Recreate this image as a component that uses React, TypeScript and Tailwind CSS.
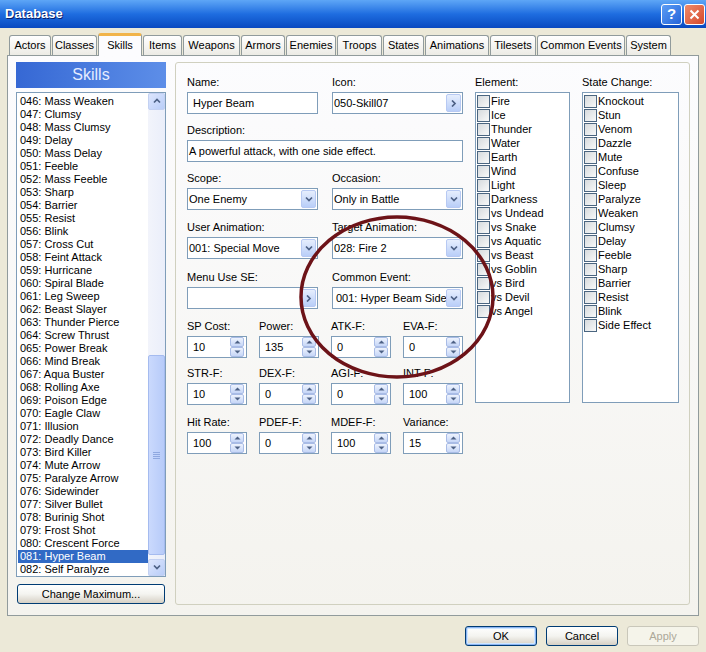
import React from 'react';

const skills = [
  '046: Mass Weaken', '047: Clumsy', '048: Mass Clumsy', '049: Delay', '050: Mass Delay',
  '051: Feeble', '052: Mass Feeble', '053: Sharp', '054: Barrier', '055: Resist',
  '056: Blink', '057: Cross Cut', '058: Feint Attack', '059: Hurricane', '060: Spiral Blade',
  '061: Leg Sweep', '062: Beast Slayer', '063: Thunder Pierce', '064: Screw Thrust', '065: Power Break',
  '066: Mind Break', '067: Aqua Buster', '068: Rolling Axe', '069: Poison Edge', '070: Eagle Claw',
  '071: Illusion', '072: Deadly Dance', '073: Bird Killer', '074: Mute Arrow', '075: Paralyze Arrow',
  '076: Sidewinder', '077: Silver Bullet', '078: Burinig Shot', '079: Frost Shot', '080: Crescent Force',
  '081: Hyper Beam', '082: Self Paralyze',
];

const elements = [
  'Fire', 'Ice', 'Thunder', 'Water', 'Earth', 'Wind', 'Light', 'Darkness',
  'vs Undead', 'vs Snake', 'vs Aquatic', 'vs Beast', 'vs Goblin', 'vs Bird', 'vs Devil', 'vs Angel',
];

const states = [
  'Knockout', 'Stun', 'Venom', 'Dazzle', 'Mute', 'Confuse', 'Sleep', 'Paralyze', 'Weaken',
  'Clumsy', 'Delay', 'Feeble', 'Sharp', 'Barrier', 'Resist', 'Blink', 'Side Effect',
];

const tabs: { label: string; w: string; active?: boolean }[] = [
  { label: 'Actors', w: 'w-[42px]' },
  { label: 'Classes', w: 'w-[45px]' },
  { label: 'Skills', w: 'w-[44px]', active: true },
  { label: 'Items', w: 'w-[39px]' },
  { label: 'Weapons', w: 'w-[57px]' },
  { label: 'Armors', w: 'w-[44px]' },
  { label: 'Enemies', w: 'w-[50px]' },
  { label: 'Troops', w: 'w-[45px]' },
  { label: 'States', w: 'w-[41px]' },
  { label: 'Animations', w: 'w-[64px]' },
  { label: 'Tilesets', w: 'w-[46px]' },
  { label: 'Common Events', w: 'w-[88px]' },
  { label: 'System', w: 'w-[45px]' },
];

const Label = ({ children }: { children: React.ReactNode }) => (
  <div className="h-[19px] leading-[18px] text-black whitespace-nowrap">{children}</div>
);

const Chevron = ({ dir }: { dir: 'down' | 'right' | 'up' }) => {
  const d = dir === 'down' ? 'M1 1.5 L4 4.5 L7 1.5' : dir === 'up' ? 'M1 4.5 L4 1.5 L7 4.5' : 'M2 0.5 L5 3.5 L2 6.5';
  return (
    <svg width="8" height="7" viewBox="0 0 8 7">
      <path d={d} stroke="#4d6185" strokeWidth="1.7" fill="none" />
    </svg>
  );
};

const SideBtn = ({ dir }: { dir: 'down' | 'right' }) => (
  <div className="absolute right-[1px] top-[1px] bottom-[1px] w-[15px] rounded-[2px] border border-[#b7c9f3] bg-gradient-to-b from-[#e6eefd] to-[#b9cef8] flex items-center justify-center">
    <Chevron dir={dir} />
  </div>
);

const Field = ({ value, pad = 'pl-[5px]', btn }: { value: string; pad?: string; btn?: 'down' | 'right' }) => (
  <div className={`relative h-[22px] border border-[#7f9db9] bg-white leading-[20px] text-black whitespace-nowrap overflow-hidden ${pad}`}>
    {value}
    {btn && <SideBtn dir={btn} />}
  </div>
);

const Tri = ({ up }: { up?: boolean }) => (
  <svg width="7" height="4" viewBox="0 0 7 4">
    <path d={up ? 'M0.5 3.5 L3.5 0.5 L6.5 3.5 Z' : 'M0.5 0.5 L3.5 3.5 L6.5 0.5 Z'} fill="#4d6185" />
  </svg>
);

const Spin = ({ value }: { value: string }) => (
  <div className="relative h-[22px] border border-[#7f9db9] bg-white pl-[5px] leading-[20px] text-black">
    {value}
    <div className="absolute right-[2px] top-0 bottom-0 w-[14px] flex flex-col">
      <div className="h-[10px] rounded-[2px] border border-[#a9bce6] bg-gradient-to-b from-[#eef3fd] to-[#c6d6f7] flex items-center justify-center">
        <Tri up />
      </div>
      <div className="h-[10px] rounded-[2px] border border-[#a9bce6] bg-gradient-to-b from-[#eef3fd] to-[#c6d6f7] flex items-center justify-center">
        <Tri />
      </div>
    </div>
  </div>
);

const Check = ({ label }: { label: string }) => (
  <div className="h-[14px] flex items-center gap-[1px] whitespace-nowrap leading-[14px]">
    <div className="w-[13px] h-[13px] border border-[#4a6580] bg-gradient-to-br from-[#d6dadd] to-[#f8f9f9]" />
    <span>{label}</span>
  </div>
);

const XpButton = ({ label, focus, disabled, w }: { label: string; focus?: boolean; disabled?: boolean; w: string }) => {
  if (disabled) {
    return (
      <div className={`${w} h-[20px] rounded-[3px] border border-[#c9c7ba] bg-[#f5f4ea] text-[#aca899] flex items-center justify-center`}>
        {label}
      </div>
    );
  }
  return (
    <div
      className={`${w} h-[20px] rounded-[3px] border border-[#003c74] bg-gradient-to-b from-[#ffffff] via-[#f4f4f0] to-[#d6d0c5] text-black flex items-center justify-center ${
        focus ? 'shadow-[inset_0_0_0_1px_#8cb4f2,inset_0_0_0_2px_#cee7ff]' : ''
      }`}
    >
      {label}
    </div>
  );
};

export default function App() {
  return (
    <div className="relative w-[706px] h-[652px] overflow-hidden bg-[#ece9d8] text-[11px] font-['Liberation_Sans',Arial,sans-serif]">
      {/* title bar */}
      <div className="h-[28px] flex items-center justify-between pl-[5px] pr-[1px] bg-gradient-to-b from-[#5ea6f6] via-[#1e6de0] to-[#0a49c0]">
        <span className="text-white font-bold text-[13px] [text-shadow:1px_1px_0_#0a1e6a]">Database</span>
        <div className="flex gap-[2px]">
          <div className="w-[21px] h-[21px] rounded-[3px] border border-white bg-gradient-to-br from-[#5c9df5] to-[#2563d8] flex items-center justify-center text-white font-bold text-[15px]">?</div>
          <div className="w-[21px] h-[21px] rounded-[3px] border border-white bg-gradient-to-br from-[#ef8a6a] to-[#d4472a] flex items-center justify-center">
            <svg width="11" height="11" viewBox="0 0 11 11">
              <path d="M1.5 1.5 L9.5 9.5 M9.5 1.5 L1.5 9.5" stroke="white" strokeWidth="2" />
            </svg>
          </div>
        </div>
      </div>

      {/* tabs */}
      <div className="pt-[5px] px-[7px]">
        <div className="h-[22px] flex items-end pl-[2px]">
          {tabs.map((t) =>
            t.active ? (
              <div
                key={t.label}
                className={`${t.w} mr-[1px] h-[23px] -mb-px relative z-10 rounded-t-[3px] border-x border-[#919b9c] border-t-[3px] border-t-[#f1b44a] bg-[#fcfcfe] flex items-start justify-center pt-[1px] text-black`}
              >
                {t.label}
              </div>
            ) : (
              <div
                key={t.label}
                className={`${t.w} mr-[1px] h-[20px] rounded-t-[3px] border-x border-t border-[#919b9c] bg-gradient-to-b from-[#ffffff] to-[#ecebe5] flex items-center justify-center text-black`}
              >
                {t.label}
              </div>
            )
          )}
        </div>

        {/* tab page */}
        <div className="h-[561px] border border-[#919b9c] bg-gradient-to-b from-[#fcfcfe] to-[#f4f3ee] flex pt-[6px] pl-[8px]">
          {/* left column */}
          <div className="w-[150px] flex flex-col">
            <div className="h-[26px] bg-gradient-to-r from-[#3668d4] to-[#5d8ee8] flex items-center justify-center text-[#e4ecff] text-[16px]">
              Skills
            </div>
            <div className="mt-[4px] h-[485px] border border-[#7f9db9] bg-white flex">
              <div className="flex-1 pt-[2px] pl-[1px] overflow-hidden">
                {skills.map((s) =>
                  s.startsWith('081') ? (
                    <div key={s} className="h-[13px] leading-[13px] pl-[2px] bg-[#316ac5] text-white whitespace-nowrap">{s}</div>
                  ) : (
                    <div key={s} className="h-[13px] leading-[13px] pl-[2px] text-black whitespace-nowrap">{s}</div>
                  )
                )}
              </div>
              {/* scrollbar */}
              <div className="w-[17px] flex flex-col bg-gradient-to-r from-[#f2f4fb] to-[#eaeefa]">
                <div className="h-[17px] rounded-[2px] border border-[#c3d1f2] bg-gradient-to-br from-[#dde6fd] to-[#b9cdf8] flex items-center justify-center">
                  <Chevron dir="up" />
                </div>
                <div className="h-[245px]" />
                <div className="h-[200px] rounded-[2px] border border-[#a5bbef] bg-gradient-to-r from-[#cad9fd] to-[#b7cbf9] flex items-center justify-center">
                  <div className="flex flex-col gap-[1px]">
                    <div className="w-[7px] h-[1px] bg-[#8fa8e0]" />
                    <div className="w-[7px] h-[1px] bg-[#8fa8e0]" />
                    <div className="w-[7px] h-[1px] bg-[#8fa8e0]" />
                    <div className="w-[7px] h-[1px] bg-[#8fa8e0]" />
                  </div>
                </div>
                <div className="flex-1" />
                <div className="h-[17px] rounded-[2px] border border-[#c3d1f2] bg-gradient-to-br from-[#dde6fd] to-[#b9cdf8] flex items-center justify-center">
                  <Chevron dir="down" />
                </div>
              </div>
            </div>
            <div className="mt-[7px] px-[1px]">
              <XpButton label="Change Maximum..." w="w-[148px]" />
            </div>
          </div>

          {/* right group box */}
          <div className="ml-[9px] w-[515px] h-[543px] rounded-[3px] border border-[#d0d0bf] pt-[10px] pl-[11px] flex">
            {/* form */}
            <div className="w-[276px] flex flex-col">
              <div className="grid grid-cols-[131px_131px] gap-x-[14px]">
                <div>
                  <Label>Name:</Label>
                  <Field value="Hyper Beam" />
                </div>
                <div>
                  <Label>Icon:</Label>
                  <Field value="050-Skill07" pad="pl-[1px]" btn="right" />
                </div>
              </div>
              <div className="mt-[7px]">
                <Label>Description:</Label>
                <Field value="A powerful attack, with one side effect." pad="pl-[1px]" />
              </div>
              <div className="mt-[7px] grid grid-cols-[131px_131px] gap-x-[14px]">
                <div>
                  <Label>Scope:</Label>
                  <Field value="One Enemy" pad="pl-[1px]" btn="down" />
                </div>
                <div>
                  <Label>Occasion:</Label>
                  <Field value="Only in Battle" pad="pl-[1px]" btn="down" />
                </div>
              </div>
              <div className="mt-[8px] grid grid-cols-[131px_131px] gap-x-[14px]">
                <div>
                  <Label>User Animation:</Label>
                  <Field value="001: Special Move" pad="pl-[1px]" btn="down" />
                </div>
                <div>
                  <Label>Target Animation:</Label>
                  <Field value="028: Fire 2" pad="pl-[1px]" btn="down" />
                </div>
              </div>
              <div className="mt-[9px] grid grid-cols-[131px_131px] gap-x-[14px]">
                <div>
                  <Label>Menu Use SE:</Label>
                  <Field value="" btn="right" />
                </div>
                <div>
                  <Label>Common Event:</Label>
                  <Field value="001: Hyper Beam Side" pad="pl-[3px]" btn="down" />
                </div>
              </div>
              <div className="mt-[8px] grid grid-cols-4 gap-x-[12px]">
                <div><Label>SP Cost:</Label><Spin value="10" /></div>
                <div><Label>Power:</Label><Spin value="135" /></div>
                <div><Label>ATK-F:</Label><Spin value="0" /></div>
                <div><Label>EVA-F:</Label><Spin value="0" /></div>
              </div>
              <div className="mt-[6px] grid grid-cols-4 gap-x-[12px]">
                <div><Label>STR-F:</Label><Spin value="10" /></div>
                <div><Label>DEX-F:</Label><Spin value="0" /></div>
                <div><Label>AGI-F:</Label><Spin value="0" /></div>
                <div><Label>INT-F:</Label><Spin value="100" /></div>
              </div>
              <div className="mt-[8px] grid grid-cols-4 gap-x-[12px]">
                <div><Label>Hit Rate:</Label><Spin value="100" /></div>
                <div><Label>PDEF-F:</Label><Spin value="0" /></div>
                <div><Label>MDEF-F:</Label><Spin value="100" /></div>
                <div><Label>Variance:</Label><Spin value="15" /></div>
              </div>
            </div>

            {/* element */}
            <div className="ml-[12px] w-[95px]">
              <Label>Element:</Label>
              <div className="h-[311px] border border-[#7f9db9] bg-white pt-[1px] pl-[1px] text-black">
                {elements.map((e) => (
                  <Check key={e} label={e} />
                ))}
              </div>
            </div>

            {/* state change */}
            <div className="ml-[12px] w-[97px]">
              <Label>State Change:</Label>
              <div className="h-[311px] border border-[#7f9db9] bg-white pt-[1px] pl-[1px] text-black">
                {states.map((s) => (
                  <Check key={s} label={s} />
                ))}
              </div>
            </div>
          </div>
        </div>

        {/* dialog buttons */}
        <div className="mt-[10px] flex justify-end gap-[9px]">
          <XpButton label="OK" focus w="w-[72px]" />
          <XpButton label="Cancel" w="w-[72px]" />
          <XpButton label="Apply" disabled w="w-[72px]" />
        </div>
      </div>

      {/* hand-drawn annotation circle */}
      <svg className="absolute left-0 top-0 pointer-events-none" width="706" height="652" viewBox="0 0 706 652">
        <ellipse cx="397" cy="297" rx="96" ry="80" fill="none" stroke="#6d1318" strokeWidth="3.5" />
      </svg>
    </div>
  );
}
